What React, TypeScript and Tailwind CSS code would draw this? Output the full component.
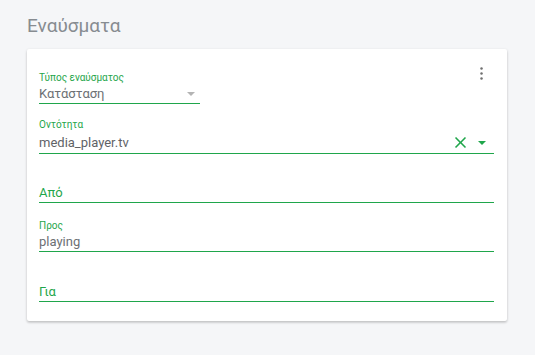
const green = "text-[#1fa64b]";

const Label = ({ children }: { children: string }) => (
  <div className={`mb-[2px] text-[10px] leading-[12px] ${green}`}>{children}</div>
);

const DotsIcon = () => (
  <svg viewBox="0 0 24 24" className="size-[15px] fill-[#6f6f6f]">
    <circle cx="12" cy="4" r="2" />
    <circle cx="12" cy="12" r="2" />
    <circle cx="12" cy="20" r="2" />
  </svg>
);

const CloseIcon = () => (
  <svg viewBox="0 0 24 24" className="size-[19px] fill-[#1fa64b]">
    <path d="M19 6.41 17.59 5 12 10.59 6.41 5 5 6.41 10.59 12 5 17.59 6.41 19 12 13.41 17.59 19 19 17.59 13.41 12z" />
  </svg>
);

const Arrow = ({ color }: { color: string }) => (
  <span
    className={`h-0 w-0 border-x-[4px] border-t-[4px] border-x-transparent ${color}`}
  />
);

export default function App() {
  return (
    <div className="h-[355px] w-[535px] bg-[#f5f6f8] px-[27px] pt-[14px] font-['Roboto',sans-serif]">
      <h1 className="h-[24px] text-[19px] leading-[24px] font-normal text-[#878c91]">
        Εναύσματα
      </h1>

      <section className="mt-[11px] h-[272px] w-[480px] rounded-[2px] bg-white px-[12px] pt-[5px] shadow-[0_1px_3px_rgba(0,0,0,0.18),0_2px_2px_rgba(0,0,0,0.08)]">
        {/* Trigger type */}
        <div className="flex h-[50px] justify-between">
          <div className="flex w-[161px] flex-col justify-end">
            <Label>Τύπος εναύσματος</Label>
            <div className="flex items-center justify-between border-b border-[#1fa64b] pb-[1px] pr-[5px]">
              <span className="text-[13px] leading-[16px] text-[#6c7074]">
                Κατάσταση
              </span>
              <Arrow color="border-t-[#b4b4b4]" />
            </div>
          </div>
          <div className="mt-[12px] mr-[6px]">
            <DotsIcon />
          </div>
        </div>

        {/* Entity */}
        <div className="flex h-[50px] w-[455px] flex-col justify-end">
          <Label>Οντότητα</Label>
          <div className="flex items-center border-b border-[#1fa64b] pb-[1px]">
            <span className="flex-1 text-[13px] leading-[16px] text-[#5f6367]">
              media_player.tv
            </span>
            <CloseIcon />
            <span className="flex w-[24px] justify-center">
              <Arrow color="border-t-[#1fa64b]" />
            </span>
          </div>
        </div>

        {/* From */}
        <div className="flex h-[49px] w-[455px] flex-col justify-end">
          <div className={`border-b border-[#1fa64b] pb-[1px] text-[13px] leading-[16px] ${green}`}>
            Από
          </div>
        </div>

        {/* To */}
        <div className="flex h-[49px] w-[455px] flex-col justify-end">
          <Label>Προς</Label>
          <div className="border-b border-[#1fa64b] pb-[1px] text-[13px] leading-[16px] text-[#6c7074]">
            playing
          </div>
        </div>

        {/* For */}
        <div className="flex h-[50px] w-[455px] flex-col justify-end">
          <div className={`border-b border-[#1fa64b] pb-[1px] text-[13px] leading-[16px] ${green}`}>
            Για
          </div>
        </div>
      </section>
    </div>
  );
}
